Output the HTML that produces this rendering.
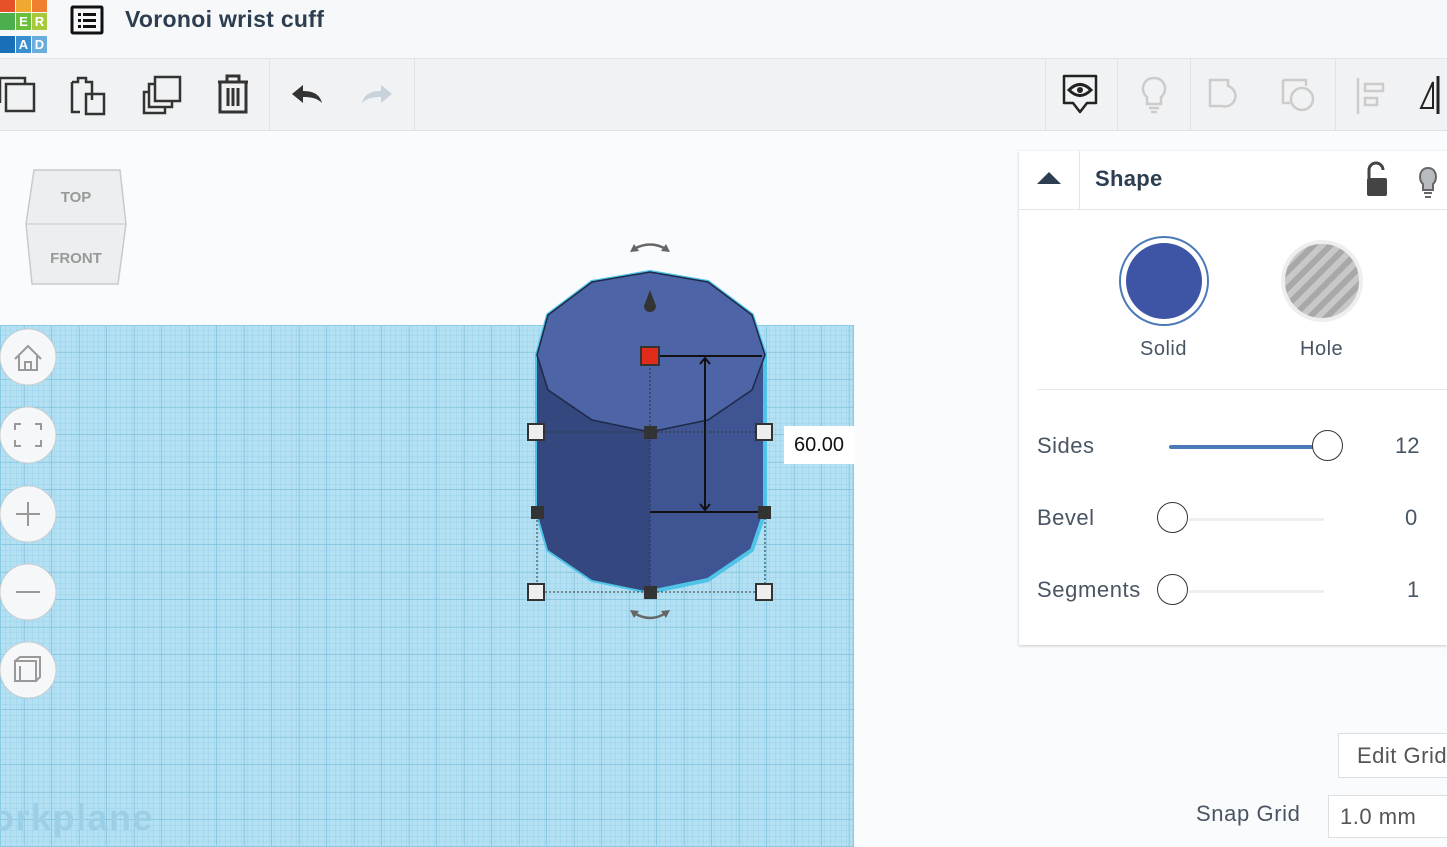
<!DOCTYPE html>
<html><head><style>
body{margin:0;width:1447px;height:847px;overflow:hidden;background:#fafbfc;font-family:"Liberation Sans",sans-serif;position:relative}
.top{position:absolute;left:0;top:0;width:1447px;height:58px;background:#f7f8f9;border-bottom:1px solid #e3e5e8}
.tb{position:absolute;left:0;top:59px;width:1447px;height:71px;background:#f1f2f3;border-bottom:1px solid #e0e2e4}
.sep{position:absolute;top:59px;width:1px;height:71px;background:#e0e2e4}
.panel{position:absolute;left:1019px;top:151px;width:428px;height:494px;background:#fff;box-shadow:0 1px 3px rgba(0,0,0,.2)}
.lbl{position:absolute;color:#4a5563;font-size:22px}
</style></head><body>
<div class="top"></div>
<div style="position:absolute;left:0;top:0;width:48px;height:54px">
<div style="position:absolute;left:0;top:-4px;width:15px;height:16px;background:#e8502a"></div>
<div style="position:absolute;left:16px;top:-4px;width:15px;height:16px;background:#f0a830"></div>
<div style="position:absolute;left:32px;top:-4px;width:15px;height:16px;background:#f08030"></div>
<div style="position:absolute;left:0;top:13px;width:15px;height:17px;background:#4cae4c"></div>
<div style="position:absolute;left:16px;top:13px;width:15px;height:17px;background:#6cbf3c;color:#fff;font:bold 13px 'Liberation Sans';text-align:center;line-height:17px">E</div>
<div style="position:absolute;left:32px;top:13px;width:15px;height:17px;background:#a8c83c;color:#fff;font:bold 13px 'Liberation Sans';text-align:center;line-height:17px">R</div>
<div style="position:absolute;left:0;top:36px;width:15px;height:17px;background:#1a70b8"></div>
<div style="position:absolute;left:16px;top:36px;width:15px;height:17px;background:#3a8fd0;color:#fff;font:bold 13px 'Liberation Sans';text-align:center;line-height:17px">A</div>
<div style="position:absolute;left:32px;top:36px;width:15px;height:17px;background:#6aaee0;color:#fff;font:bold 13px 'Liberation Sans';text-align:center;line-height:17px">D</div>
</div>
<svg style="position:absolute;left:70px;top:5px" width="34" height="30"><rect x="2" y="2" width="30" height="26" fill="none" stroke="#111" stroke-width="3" rx="1"/><g fill="#111"><rect x="8" y="8" width="3" height="3"/><rect x="13" y="8" width="13" height="3"/><rect x="8" y="14" width="3" height="3"/><rect x="13" y="14" width="13" height="3"/><rect x="8" y="20" width="3" height="3"/><rect x="13" y="20" width="13" height="3"/></g></svg>
<div style="position:absolute;left:125px;top:6px;font-size:23px;font-weight:bold;color:#2c3e50;letter-spacing:0.3px">Voronoi wrist cuff</div>
<div class="tb"></div>
<div class="sep" style="left:269px"></div><div class="sep" style="left:414px"></div>
<div class="sep" style="left:1045px"></div><div class="sep" style="left:1117px"></div><div class="sep" style="left:1190px"></div><div class="sep" style="left:1335px"></div>
<svg style="position:absolute;left:0;top:70px" width="420" height="50" fill="none" stroke="#333" stroke-width="2.5">
<path d="M0 8H25V14M0 33V8"/><rect x="6" y="14" width="28" height="27"/>
<path d="M72 12H78V8H86V12H92V30M72 12V42H80"/><rect x="86" y="24" width="18" height="20"/>
<rect x="155" y="7" width="25" height="24"/><path d="M155 14H149V37H172V31M149 22H144V43H165V37"/>
<path d="M218 12H248M227 12V6H239V12M220 12V42H246V12M228 18V36M233 18V36M238 18V36" stroke-width="3"/>
<path d="M292 24L303 15V21C314 21 320 25 322 33C317 28 311 27 303 27V33Z" fill="#333" stroke="none"/>
<path d="M392 24L381 15V21C370 21 364 25 362 33C367 28 373 27 381 27V33Z" fill="#c8d2dc" stroke="none"/>
</svg>
<svg style="position:absolute;left:1050px;top:70px" width="397" height="50" fill="none" stroke-width="2.5">
<path d="M14 6H46V33H37L30 42L23 33H14Z" stroke="#222" stroke-linejoin="round"/><path d="M19 20Q30 9 41 20Q30 31 19 20Z" stroke="#222" stroke-width="3"/><circle cx="30" cy="20" r="3" fill="#222"/>
<path d="M97 27C90 22 92 8 104 8C116 8 118 22 111 27V34H97Z M99 38H109M101 42H107" stroke="#ccc"/>
<path d="M160 10H178V16A10 10 0 1 1 172 36H160Z" stroke="#ccc"/>
<path d="M233 10H256V16M233 10V33H240" stroke="#ccc"/><circle cx="252" cy="29" r="11" stroke="#ccc"/>
<path d="M308 8V44" stroke="#ccc"/><rect x="315" y="14" width="18" height="7" stroke="#ccc"/><rect x="315" y="28" width="12" height="7" stroke="#ccc"/>
<path d="M371 38L383 12V38Z" stroke="#222" stroke-width="2"/><path d="M388 6V44" stroke="#222" stroke-width="3"/>
</svg>
<svg style="position:absolute;left:22px;top:168px" width="108" height="122">
<path d="M12 2H98L104 56L96 116H10L4 56Z" fill="#eceeef" stroke="#c8cacc" stroke-width="1.5"/>
<path d="M4 56H104" stroke="#c8cacc"/>
<text x="54" y="34" font-family="Liberation Sans" font-weight="bold" font-size="15" fill="#999" text-anchor="middle">TOP</text>
<text x="54" y="95" font-family="Liberation Sans" font-weight="bold" font-size="15" fill="#999" text-anchor="middle">FRONT</text>
</svg>
<svg style="position:absolute;left:0;top:325px" width="854" height="522">
<defs>
<pattern id="m" width="5.5" height="5.5" patternUnits="userSpaceOnUse"><path d="M5.5 0V5.5H0" fill="none" stroke="#94cfe6" stroke-width="0.8"/></pattern>
<pattern id="M" x="-3" y="0" width="27.5" height="27.5" patternUnits="userSpaceOnUse"><path d="M27.5 0V27.5H0" fill="none" stroke="#74bad8" stroke-width="1.3"/></pattern>
</defs>
<rect width="854" height="522" fill="#b3e0f2"/><rect width="854" height="522" fill="url(#m)"/><rect width="854" height="522" fill="url(#M)"/>
<rect x="0.5" y="0.5" width="853" height="521" fill="none" stroke="#8ccbe4"/>
<text x="-8" y="505" font-family="Liberation Sans" font-weight="bold" font-size="36" fill="#9ccfe6" letter-spacing="1.5">orkplane</text>
</svg>
<svg style="position:absolute;left:0;top:328px" width="60" height="376" fill="#f6f7f8" stroke="#c8ccd0">
<circle cx="28" cy="29" r="28"/><circle cx="28" cy="107" r="28"/><circle cx="28" cy="186" r="28"/><circle cx="28" cy="264" r="28"/><circle cx="28" cy="342" r="28"/>
<g fill="none" stroke="#999" stroke-width="2">
<path d="M15 31L28 18L41 31M19 28V42H37V28M25 42V34H31V42"/>
<path d="M15 102V96H21M35 96H41V102M41 112V118H35M21 118H15V112"/>
<path d="M16 186H40M28 174V198"/><path d="M16 264H40"/>
<path d="M15 333H36V353H15Z M15 333L20 329H40V349L36 353M20 338V353"/>
</g></svg>
<svg style="position:absolute;left:500px;top:230px" width="360" height="400">
<path d="M37 125L48 85L92 52L150 42L208 52L252 85L265 125V282L252 320L208 350L150 362L92 350L48 320L37 282Z" fill="#3f5593" stroke="#4fc3e8" stroke-width="4" stroke-linejoin="round"/>
<path d="M37 125V282L48 320L92 350L150 362V202L92 190L48 160Z" fill="#34487f"/>
<path d="M37 125L48 85L92 52L150 42L208 52L252 85L265 125L252 160L208 190L150 202L92 190L48 160Z" fill="#4d64a6" stroke="#1e2a48" stroke-width="1.5"/>
<path d="M150 60L156 76A6 6 0 1 1 144 76Z" fill="#333"/>
<g stroke="#111" stroke-width="2" fill="none"><path d="M150 126H262M150 282H262M205 128V280"/><path d="M200 134L205 128L210 134M200 274L205 280L210 274"/></g>
<g stroke="#333" stroke-dasharray="2 2" fill="none"><path d="M37 202H265M150 126V362M37 282V362H265V282"/></g>
<rect x="141" y="117" width="18" height="18" fill="#e02a1a" stroke="#333" stroke-width="2"/>
<g fill="#eee" stroke="#333" stroke-width="2"><rect x="28" y="194" width="16" height="16"/><rect x="256" y="194" width="16" height="16"/><rect x="28" y="354" width="16" height="16"/><rect x="256" y="354" width="16" height="16"/></g>
<g fill="#333"><rect x="144" y="196" width="13" height="13"/><rect x="31" y="276" width="13" height="13"/><rect x="258" y="276" width="13" height="13"/><rect x="144" y="356" width="13" height="13"/></g>
<g stroke="#666" stroke-width="2.5" fill="none"><path d="M134 19Q150 10 166 19M134 383Q150 393 166 383"/></g>
<g fill="#666"><path d="M130 22L134 14L139 21Z M170 22L166 14L161 21Z M130 380L134 388L139 381Z M170 380L166 388L161 381Z"/></g>
</svg>
<div style="position:absolute;left:784px;top:426px;width:70px;height:38px;background:#fff;font-size:20px;line-height:38px;text-align:center;color:#111">60.00</div>
<div class="panel">
<div style="position:absolute;left:60px;top:0;width:1px;height:58px;background:#e3e5e8"></div>
<div style="position:absolute;left:0;top:58px;width:428px;height:1px;background:#e3e5e8"></div>
<svg style="position:absolute;left:18px;top:20px" width="24" height="14"><path d="M0 13L12 1L24 13Z" fill="#2c3e50"/></svg>
<div style="position:absolute;left:76px;top:15px;font-size:22px;font-weight:bold;color:#2c3e50;letter-spacing:0.3px">Shape</div>
<svg style="position:absolute;left:346px;top:9px" width="80" height="40"><path d="M4 20V10A7 7 0 0 1 18 10" stroke="#444" stroke-width="3" fill="none"/><rect x="2" y="18" width="20" height="18" rx="2" fill="#444"/><path d="M58 24C53 20 54 8 63 8C72 8 73 20 68 24V30H58Z" fill="#b8bcc0" stroke="#666" stroke-width="2"/><path d="M59 33H67M60 37H66" stroke="#666" stroke-width="2"/></svg>
<svg style="position:absolute;left:98px;top:83px" width="260" height="94"><circle cx="47" cy="47" r="44" fill="#fff" stroke="#4a7ab8" stroke-width="2"/><circle cx="47" cy="47" r="38" fill="#3e55a6"/>
<defs><pattern id="h" width="12" height="12" patternUnits="userSpaceOnUse" patternTransform="rotate(45)"><rect width="12" height="12" fill="#c8c8c8"/><rect width="6" height="12" fill="#a8a8a8"/></pattern></defs>
<circle cx="205" cy="47" r="39" fill="url(#h)" stroke="#eee" stroke-width="4"/></svg>
<div class="lbl" style="left:121px;top:187px;font-size:20px;letter-spacing:0.5px">Solid</div>
<div class="lbl" style="left:281px;top:187px;font-size:20px;letter-spacing:0.5px">Hole</div>
<div style="position:absolute;left:18px;top:238px;width:410px;height:1px;background:#e6e8ea"></div>
<div class="lbl" style="left:18px;top:282px;letter-spacing:0.5px">Sides</div>
<div style="position:absolute;left:150px;top:294px;width:150px;height:4px;background:#4a7ab8;border-radius:2px"></div>
<div style="position:absolute;left:293px;top:279px;width:29px;height:29px;border:1.5px solid #333;border-radius:50%;background:#fff"></div>
<div class="lbl" style="left:376px;top:282px">12</div>
<div class="lbl" style="left:18px;top:354px;letter-spacing:0.5px">Bevel</div>
<div style="position:absolute;left:170px;top:367px;width:135px;height:3px;background:#eceef0"></div>
<div style="position:absolute;left:138px;top:351px;width:29px;height:29px;border:1.5px solid #333;border-radius:50%;background:#fff"></div>
<div class="lbl" style="left:386px;top:354px">0</div>
<div class="lbl" style="left:18px;top:426px;letter-spacing:0.6px">Segments</div>
<div style="position:absolute;left:170px;top:439px;width:135px;height:3px;background:#eceef0"></div>
<div style="position:absolute;left:138px;top:423px;width:29px;height:29px;border:1.5px solid #333;border-radius:50%;background:#fff"></div>
<div class="lbl" style="left:388px;top:426px">1</div>
</div>
<div style="position:absolute;left:1338px;top:733px;width:120px;height:43px;border:1px solid #dcdfe2;background:#fff;font-size:22px;color:#555;line-height:43px;padding-left:18px;letter-spacing:0.5px">Edit Grid</div>
<div class="lbl" style="left:1196px;top:801px;letter-spacing:0.6px">Snap Grid</div>
<div style="position:absolute;left:1328px;top:795px;width:130px;height:41px;border:1px solid #dcdfe2;background:#fff;font-size:22px;color:#555;line-height:41px;padding-left:11px;letter-spacing:0.5px">1.0 mm</div>
</body></html>
